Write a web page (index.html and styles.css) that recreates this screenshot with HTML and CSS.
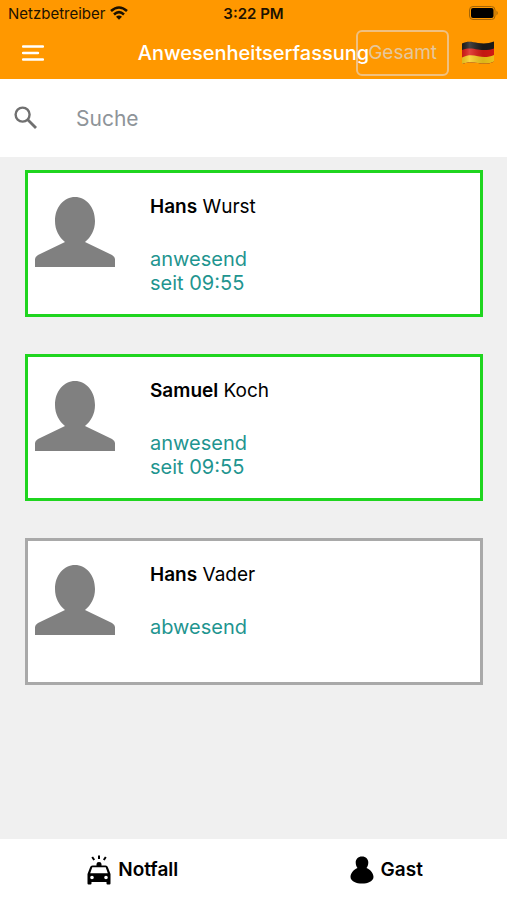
FILE: index.html
```
<!DOCTYPE html>
<html lang="de">
<head>
    <meta charset="UTF-8">
    <meta name="viewport" content="width=device-width, initial-scale=1.0">
    <title>Anwesenheitserfassung</title>
    <link rel="stylesheet" href="styles.css">
</head>
<body>
    <svg class="sprite" aria-hidden="true">
        <symbol id="person" viewBox="0 0 80 70">
            <path d="M40 0C51 0 60 10 60 24C60 33 56 40 50 45L77 58Q80 60 80 62V70H0V62Q0 60 3 58L30 45C24 40 20 33 20 24C20 10 29 0 40 0Z"/>
        </symbol>
    </svg>
    <header class="header">
        <div class="status-bar">
            <div class="carrier">
                <span>Netzbetreiber</span>
                <svg class="wifi" viewBox="0 0 18 14">
                    <g fill="none" stroke="#1c1200" stroke-width="2.6">
                        <path d="M1 5Q9 -2 17 5"/>
                        <path d="M4 8.4Q9 4 14 8.4"/>
                    </g>
                    <path fill="#1c1200" d="M6 10.8Q9 8.2 12 10.8L9 13.8Z"/>
                </svg>
            </div>
            <span class="time">3:22 PM</span>
            <svg class="battery" viewBox="0 0 30 14">
                <rect x="0.5" y="0.5" width="25.5" height="13" rx="3.5" fill="none" stroke="#a36507"/>
                <rect x="2" y="2" width="22.5" height="10" rx="2" fill="#000"/>
                <path d="M27.5 4.5Q30 7 27.5 9.5Z" fill="#a36507"/>
            </svg>
        </div>
        <div class="toolbar">
            <button type="button" class="menu-button" aria-label="Menü">
                <svg viewBox="0 0 22 16">
                    <path d="M1 1.5H21M1 8H16M1 14.5H21" stroke="#fff" stroke-width="2.4" stroke-linecap="round"/>
                </svg>
            </button>
            <h1>Anwesenheitserfassung</h1>
            <div class="actions">
                <button type="button" class="total-button">Gesamt</button>
                <button type="button" class="flag-button" aria-label="Deutsch">
                    <svg viewBox="0 0 34 24">
                        <defs>
                            <clipPath id="flag">
                                <path d="M1 2.5C7 -0.5 11 1 17 2C23 3 28 2.5 33 0.5V20.5C28 23 23 23 17 22C11 21 7 20.5 1 23Z"/>
                            </clipPath>
                            <linearGradient id="shine">
                                <stop offset="0" stop-color="#000" stop-opacity="0.1"/>
                                <stop offset="0.25" stop-color="#fff" stop-opacity="0.18"/>
                                <stop offset="0.65" stop-color="#000" stop-opacity="0.12"/>
                                <stop offset="1" stop-color="#000" stop-opacity="0.05"/>
                            </linearGradient>
                        </defs>
                        <g clip-path="url(#flag)">
                            <rect width="34" height="24" fill="#1c1b1a"/>
                            <path d="M0 9.5C7 6.5 11 7.5 17 8.5C23 9.5 28 9.5 34 7V24H0Z" fill="#dc1a14"/>
                            <path d="M0 17C7 13.5 11 14 17 15.3C23 16.5 28 16.5 34 13.5V24H0Z" fill="#f9cd1c"/>
                            <rect width="34" height="24" fill="url(#shine)"/>
                        </g>
                    </svg>
                </button>
            </div>
        </div>
    </header>

    <label class="search">
        <svg class="search-icon" viewBox="0 0 24 24">
            <circle cx="8.6" cy="8.6" r="7" fill="none" stroke="#707070" stroke-width="2.4"/>
            <path d="M13.8 13.8L22 22" stroke="#707070" stroke-width="2.8"/>
        </svg>
        <input type="text" placeholder="Suche" aria-label="Suche">
    </label>

    <main class="list">
        <article class="card present">
            <svg class="avatar"><use href="#person"/></svg>
            <div class="info">
                <h2><b>Hans</b> Wurst</h2>
                <p>anwesend<br>seit 09:55</p>
            </div>
        </article>
        <article class="card present">
            <svg class="avatar"><use href="#person"/></svg>
            <div class="info">
                <h2><b>Samuel</b> Koch</h2>
                <p>anwesend<br>seit 09:55</p>
            </div>
        </article>
        <article class="card">
            <svg class="avatar"><use href="#person"/></svg>
            <div class="info">
                <h2><b>Hans</b> Vader</h2>
                <p>abwesend</p>
            </div>
        </article>
    </main>

    <footer class="tabs">
        <button type="button">
            <svg class="car" viewBox="0 0 24 30">
                <path d="M12 0.5V4M5.2 2L7.2 5M18.8 2L16.8 5" stroke="#000" stroke-width="2"/>
                <path d="M9.5 11V9Q9.5 7 12 7T14.5 9V11Z"/>
                <path fill-rule="evenodd" d="M5.5 10.5H18.5Q20.5 10.5 21 12.5L23.5 19V28.5Q23.5 29.5 22.5 29.5H20.5Q19.5 29.5 19.5 28.5V27H4.5V28.5Q4.5 29.5 3.5 29.5H1.5Q0.5 29.5 0.5 28.5V19L3 12.5Q3.5 10.5 5.5 10.5ZM5.3 12.2L3.2 18.3H20.8L18.7 12.2ZM5 20.7A1.8 1.8 0 1 0 5 24.3A1.8 1.8 0 1 0 5 20.7ZM19 20.7A1.8 1.8 0 1 0 19 24.3A1.8 1.8 0 1 0 19 20.7Z"/>
            </svg>
            Notfall
        </button>
        <button type="button">
            <svg class="guest" viewBox="0 0 24 28">
                <path d="M12 0.5C16 0.5 18.3 3.2 18.3 6.5C18.3 9 17.4 10.6 16.5 12C21 14 23.5 17.5 23.5 21C23.5 23.5 21.5 25 19.5 26C17.5 27.3 15 27.5 12 27.5S6.5 27.3 4.5 26C2.5 25 0.5 23.5 0.5 21C0.5 17.5 3 14 7.5 12C6.6 10.6 5.7 9 5.7 6.5C5.7 3.2 8 0.5 12 0.5Z"/>
            </svg>
            Gast
        </button>
    </footer>
</body>
</html>
```
FILE: styles.css
```
* {
    box-sizing: border-box;
}
body {
    font-family: Inter, "Liberation Sans", sans-serif;
    background-color: #f0f0f0;
    color: #000;
    display: flex;
    flex-direction: column;
    min-height: 100vh;
    margin: 0;
}
h1, h2, p {
    margin: 0;
    font-weight: normal;
}
svg {
    display: block;
    flex: none;
}
button {
    font-family: inherit;
    padding: 0;
    border: none;
    background: none;
    color: inherit;
    cursor: pointer;
}
.sprite {
    position: absolute;
    width: 0;
    height: 0;
}
.header {
    background-color: #ff9800;
}
.status-bar {
    display: grid;
    grid-template-columns: 1fr auto 1fr;
    align-items: center;
    height: 26px;
    padding: 0 8px;
    font-size: 15px;
    color: #1c1200;
}
.carrier {
    display: flex;
    align-items: center;
    gap: 5px;
}
.wifi {
    width: 18px;
    height: 14px;
}
.time {
    font-weight: 600;
}
.battery {
    justify-self: end;
    width: 30px;
    height: 14px;
}
.toolbar {
    display: grid;
    grid-template-columns: auto 1fr;
    align-items: center;
    height: 53px;
    padding: 0 12px;
}
.menu-button {
    grid-area: 1 / 1;
    padding: 10px;
}
.menu-button svg {
    width: 22px;
    height: 16px;
}
/* the title is centered over the whole bar and may run into the actions */
.toolbar h1 {
    grid-area: 1 / 1 / 2 / 3;
    justify-self: center;
    z-index: 1;
    font-size: 20px;
    font-weight: 500;
    color: #fff;
    pointer-events: none;
}
.actions {
    grid-area: 1 / 2;
    justify-self: end;
    display: flex;
    align-items: center;
    gap: 12px;
}
.total-button {
    height: 46px;
    padding: 0 10px;
    border: 2px solid #f0c080;
    border-radius: 6px;
    font-size: 19px;
    color: #e6c79c;
}
.flag-button svg {
    width: 34px;
    height: 24px;
}
.search {
    display: flex;
    align-items: center;
    gap: 38px;
    height: 78px;
    padding: 0 14px;
    background-color: #fff;
}
.search-icon {
    width: 24px;
    height: 24px;
}
.search input {
    flex: 1;
    min-width: 0;
    padding: 0;
    border: none;
    outline: none;
    background: none;
    font-family: inherit;
    font-size: 21px;
}
.search input::placeholder {
    color: #8e9499;
}
.list {
    flex: 1;
    display: flex;
    flex-direction: column;
    gap: 37px;
    padding: 13px 24px 37px 25px;
}
.card {
    display: flex;
    gap: 35px;
    padding: 24px 7px 19px;
    border: 3px solid #a9a9a9;
    background-color: #fff;
}
.card.present {
    border-color: #1fd51f;
}
.avatar {
    width: 80px;
    height: 70px;
    fill: #808080;
}
.info {
    min-height: 98px;
}
.info h2 {
    margin-bottom: 30px;
    font-size: 19px;
    line-height: 20px;
}
.info b {
    font-weight: 600;
}
.info p {
    font-size: 20px;
    line-height: 24px;
    color: #1f9590;
}
.tabs {
    display: grid;
    grid-template-columns: 1fr 1fr;
    height: 61px;
    background-color: #fff;
}
.tabs button {
    display: flex;
    justify-content: center;
    align-items: center;
    gap: 7px;
    padding-left: 12px;
    font-size: 19px;
    font-weight: 600;
}
.car {
    width: 24px;
    height: 30px;
}
.guest {
    width: 24px;
    height: 28px;
}
```
